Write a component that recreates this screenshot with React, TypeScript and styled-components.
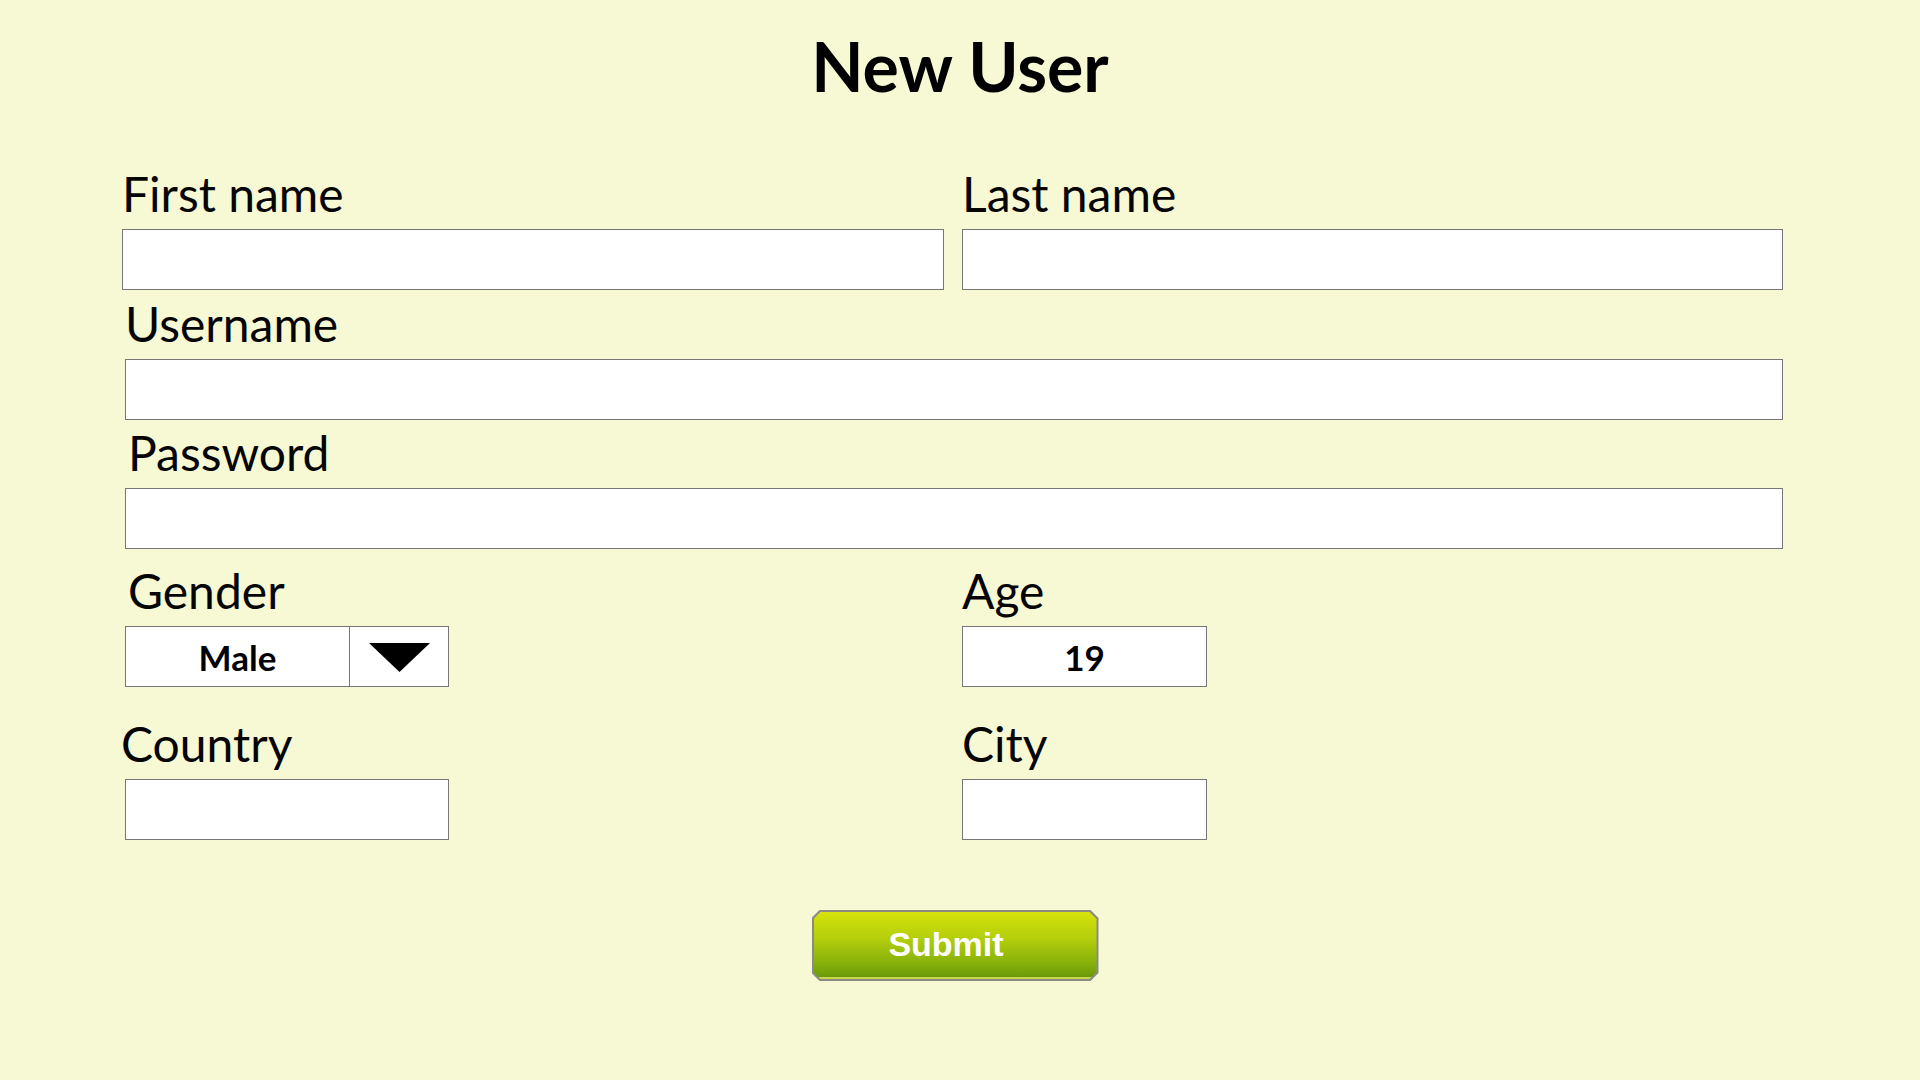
import React from "react";
import styled, { createGlobalStyle } from "styled-components";

const GlobalStyle = createGlobalStyle`
  html, body {
    margin: 0;
    padding: 0;
    background: #f7f8d4;
  }
  body {
    font-family: Lato, "Open Sans", sans-serif;
    color: #000;
  }
`;

const Page = styled.div`
  width: 1920px;
  min-height: 1080px;
  box-sizing: border-box;
  padding-top: 26px;
  background: #f7f8d4;
  display: flex;
  flex-direction: column;
  align-items: center;
`;

const Title = styled.h1`
  margin: 0;
  font: 700 68px/80px Lato, "Open Sans", sans-serif;
  color: #000;
  text-align: center;
`;

const Form = styled.form`
  align-self: flex-start;
  width: 1661px;
  margin: 60px 0 0 122px;
  display: flex;
  flex-direction: column;
`;

const Row = styled.div<{ $cols: string; $gap?: number; $inset?: number; $top?: number }>`
  display: grid;
  grid-template-columns: ${(p) => p.$cols};
  column-gap: ${(p) => p.$gap ?? 0}px;
  padding-left: ${(p) => p.$inset ?? 0}px;
  margin-top: ${(p) => p.$top ?? 0}px;
`;

const Field = styled.div`
  display: flex;
  flex-direction: column;
  align-items: flex-start;
  min-width: 0;
`;

const Label = styled.label<{ $shift?: number }>`
  display: block;
  font: 400 48px/56px Lato, "Open Sans", sans-serif;
  color: #050505;
  margin: 0 0 7px ${(p) => p.$shift ?? 0}px;
  white-space: nowrap;
`;

const TextBox = styled.input<{ $width?: number }>`
  box-sizing: border-box;
  width: ${(p) => (p.$width ? `${p.$width}px` : "100%")};
  height: 61px;
  margin: 0;
  padding: 0 12px;
  border: 1px solid #767676;
  border-radius: 0;
  background: #fff;
  outline: none;
  font: 700 35px Lato, "Open Sans", sans-serif;
  color: #000;
  text-align: center;
`;

const Select = styled.div`
  box-sizing: border-box;
  width: 324px;
  height: 61px;
  display: flex;
  border: 1px solid #767676;
  background: #fff;
`;

const SelectValue = styled.div`
  flex: 0 0 223px;
  display: flex;
  align-items: center;
  justify-content: center;
  border-right: 1px solid #767676;
  font: 700 35px Lato, "Open Sans", sans-serif;
  color: #000;
`;

const SelectArrow = styled.div`
  flex: 1;
  display: flex;
  align-items: center;
  justify-content: center;
  padding-top: 2px;
`;

const ButtonRow = styled.div`
  display: flex;
  justify-content: center;
  padding-left: 5px;
  margin-top: 70px;
`;

const chamfer = (c: number) =>
  `polygon(${c}px 0, calc(100% - ${c}px) 0, 100% ${c}px, 100% calc(100% - ${c}px), calc(100% - ${c}px) 100%, ${c}px 100%, 0 calc(100% - ${c}px), 0 ${c}px)`;

const SubmitButton = styled.button`
  box-sizing: border-box;
  width: 287px;
  height: 71px;
  padding: 2px;
  border: none;
  background: #8b8b84;
  clip-path: ${chamfer(8)};
  cursor: pointer;
`;

const SubmitFace = styled.span`
  display: flex;
  align-items: center;
  justify-content: center;
  width: 100%;
  height: 100%;
  padding-right: 18px;
  box-sizing: border-box;
  clip-path: ${chamfer(7)};
  background: linear-gradient(180deg, #d6e20a 0%, #b4cf0b 40%, #8cb40b 75%, #6a9a09 100%);
  border-bottom: 2px solid #c9d84a;
  font: 700 34px "Liberation Sans", Arial, sans-serif;
  color: #fff;
`;

export default function App() {
  return (
    <>
      <GlobalStyle />
      <Page>
        <Title>New User</Title>
        <Form onSubmit={(e) => e.preventDefault()}>
          <Row $cols="822px 1fr" $gap={18}>
            <Field>
              <Label>First name</Label>
              <TextBox type="text" />
            </Field>
            <Field>
              <Label>Last name</Label>
              <TextBox type="text" />
            </Field>
          </Row>
          <Row $cols="1fr" $inset={3} $top={6}>
            <Field>
              <Label>Username</Label>
              <TextBox type="text" />
            </Field>
          </Row>
          <Row $cols="1fr" $inset={3} $top={5}>
            <Field>
              <Label $shift={3}>Password</Label>
              <TextBox type="password" />
            </Field>
          </Row>
          <Row $cols="837px 1fr" $inset={3} $top={14}>
            <Field>
              <Label $shift={3}>Gender</Label>
              <Select>
                <SelectValue>Male</SelectValue>
                <SelectArrow>
                  <svg width="61" height="29" viewBox="0 0 61 29">
                    <polygon points="0,0 61,0 30.5,29" fill="#000" />
                  </svg>
                </SelectArrow>
              </Select>
            </Field>
            <Field>
              <Label>Age</Label>
              <TextBox type="text" $width={245} defaultValue="19" />
            </Field>
          </Row>
          <Row $cols="837px 1fr" $inset={3} $top={29}>
            <Field>
              <Label $shift={-4}>Country</Label>
              <TextBox type="text" $width={324} />
            </Field>
            <Field>
              <Label>City</Label>
              <TextBox type="text" $width={245} />
            </Field>
          </Row>
          <ButtonRow>
            <SubmitButton type="submit">
              <SubmitFace>Submit</SubmitFace>
            </SubmitButton>
          </ButtonRow>
        </Form>
      </Page>
    </>
  );
}
